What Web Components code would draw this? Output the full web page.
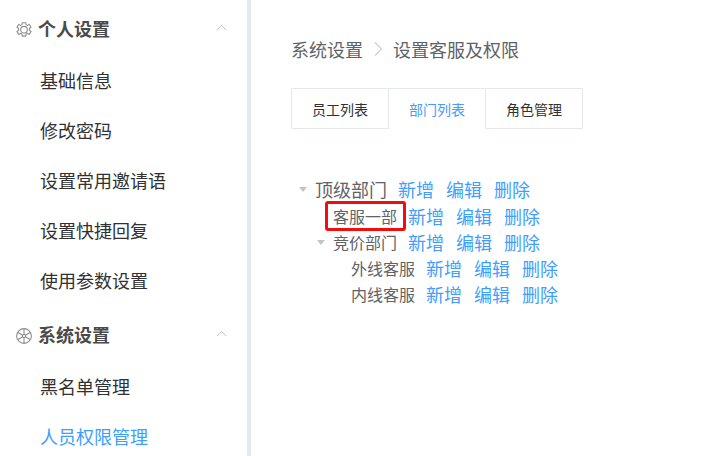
<!DOCTYPE html>
<html lang="zh"><head><meta charset="utf-8">
<style>
html,body{margin:0;padding:0;width:715px;height:456px;overflow:hidden;background:#fff}
body{font-family:"Noto Sans CJK SC","Liberation Sans",sans-serif;display:flex}
</style></head><body>
<template id="t-app"><style>
:host{display:flex;width:715px;height:456px;overflow:hidden}
.main{flex:1;padding:36px 0 0 40px}
</style><slot name="side"></slot><div class="main"><slot></slot></div></template>

<template id="t-side"><style>
:host{display:block;width:247px;height:456px;border-right:4px solid #e3e9f2;box-sizing:content-box;flex:none;overflow:hidden}
</style><slot></slot></template>

<template id="t-group"><style>
:host{display:block;padding-top:4px}
.h{display:flex;align-items:center;height:52px;padding-left:16px;color:#4a4a4a;font-size:18px;font-weight:700}
.h .t{line-height:48px;height:52px}
.i{width:16px;height:16px;margin-right:6px;flex:none;margin-top:-1px}
.t{flex:1}
.c{width:11px;height:7px;margin-right:20px;margin-top:-5px}
svg{display:block}
::slotted(svg){display:block}
</style><div class="h"><span class="i"><slot name="icon"></slot></span><span class="t" id="t"></span>
<svg class="c" viewBox="0 0 11 7" fill="none" stroke="#c0c4cc" stroke-width="1"><path d="M1 6 5.5 1.5 10 6"/></svg></div><slot></slot></template>

<template id="t-item"><style>
:host{display:block;height:50px;line-height:49px;padding-left:40px;font-size:18px;color:#303133;white-space:nowrap}
:host([active]){color:#409eff}
</style><slot></slot></template>

<template id="t-crumb"><style>
:host{display:flex;align-items:center;height:26px;font-size:18px;color:#606266;white-space:nowrap}
svg{width:10px;height:14px;margin:0 10px;display:block}
</style><slot name="a"></slot><svg viewBox="0 0 10 14" fill="none" stroke="#c8cdd6" stroke-width="1.1"><path d="M2 .5 8.5 7 2 13.5"/></svg><slot name="b"></slot></template>

<template id="t-tabs"><style>
:host{display:inline-flex;margin-top:26px;border:1px solid #e4e7ed;border-bottom:0;border-radius:2px;height:41px;box-sizing:border-box;align-self:flex-start}
</style><slot></slot></template>

<template id="t-tab"><style>
:host{display:block;width:96px;height:39px;line-height:40px;text-align:center;font-size:14px;color:#303133;border-right:1px solid #e4e7ed;border-bottom:1px solid #e4e7ed;white-space:nowrap}
:host(:last-child){border-right:0}
:host([active]){color:#409eff;background:#fff;border-bottom-color:transparent}
</style><slot></slot></template>

<template id="t-tree"><style>
:host{display:block;margin-top:47px;color:#606266}
</style><slot></slot></template>

<template id="t-row"><style>
:host{display:flex;align-items:center;height:26px;white-space:nowrap;font-size:16px;padding-left:var(--pad,0px)}
:host([big]){font-size:18px;margin-bottom:1px}
.caret{width:0;height:0;border:4px solid transparent;border-top:5px solid #c0c4cc;border-bottom:0;margin:0 8px 0 0;flex:none;visibility:hidden}
:host([open]) .caret{visibility:visible}
.l{position:relative;display:block}
:host([marked]) .l::after{content:"";position:absolute;left:-8px;right:-9px;top:-3px;bottom:-3px;border:3px solid #f00f0f;border-radius:3px;box-sizing:border-box}
.a{display:flex;gap:12px;margin-left:11px;font-size:18px;color:#409eff}
</style><span class="caret" part="caret"></span><span class="l"><slot></slot></span><span class="a"><span>新增</span><span>编辑</span><span>删除</span></span></template>

<script>
function def(tag,tpl,extra){customElements.define(tag,class extends HTMLElement{constructor(){super();this.attachShadow({mode:'open'}).append(document.getElementById(tpl).content.cloneNode(true));}connectedCallback(){if(extra)extra(this)}})}
def('x-app','t-app');def('x-side','t-side');
def('x-group','t-group',e=>{e.shadowRoot.getElementById('t').textContent=e.getAttribute('label')});
def('x-item','t-item');def('x-crumb','t-crumb');def('x-tabs','t-tabs');def('x-tab','t-tab');def('x-tree','t-tree');def('x-row','t-row');
</script>

<x-app>
<x-side slot="side">
<x-group label="个人设置">
<svg slot="icon" width="16" height="16" viewBox="0 0 16 16" fill="none" stroke="#8f8f8f" stroke-width="1.1"><path d="M6.4 .7h3.2l.5 2 1.3.7 1.9-.9 1.7 2.8-1.6 1.3v1.6l1.6 1.3-1.7 2.8-1.9-.9-1.3.7-.5 2H6.4l-.5-2-1.3-.7-1.9.9L1 9.5 2.600 8.200V6.600L1 5.300l1.700-2.800 1.900.9 1.300-.7z"/><circle cx="8" cy="7.700" r="3.300"/></svg>
<x-item>基础信息</x-item><x-item>修改密码</x-item><x-item>设置常用邀请语</x-item><x-item>设置快捷回复</x-item><x-item>使用参数设置</x-item>
</x-group>
<x-group label="系统设置">
<svg slot="icon" width="16" height="16" viewBox="0 0 16 16" fill="none" stroke="#8f8f8f" stroke-width="1.1"><circle cx="8" cy="8" r="7.4"/><circle cx="8" cy="8" r="1.6"/><path d="M8 .6v5.800M8 9.600v5.800M1.600 4.300l5 2.900M9.400 8.800l5 2.900M14.400 4.300l-5 2.900M6.600 8.800l-5 2.900"/></svg>
<x-item>黑名单管理</x-item><x-item active>人员权限管理</x-item>
</x-group>
</x-side>
<x-crumb><span slot="a">系统设置</span><span slot="b">设置客服及权限</span></x-crumb>
<x-tabs><x-tab>员工列表</x-tab><x-tab active>部门列表</x-tab><x-tab>角色管理</x-tab></x-tabs>
<x-tree>
<x-row big open style="--pad:8px">顶级部门</x-row>
<x-row marked style="--pad:26px">客服一部</x-row>
<x-row open style="--pad:26px">竞价部门</x-row>
<x-row style="--pad:44px">外线客服</x-row>
<x-row style="--pad:44px">内线客服</x-row>
</x-tree>
</x-app>
</body></html>
